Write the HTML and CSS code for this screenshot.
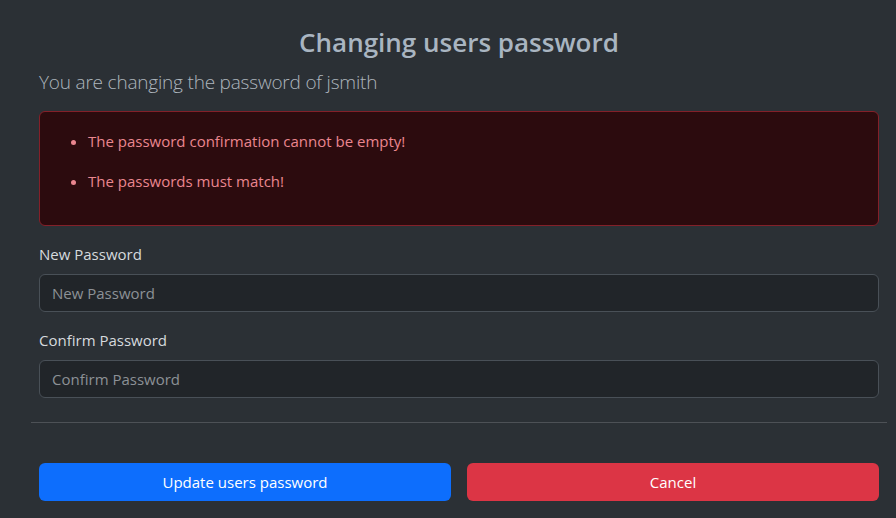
FILE: index.html
```html
<!DOCTYPE html>
<html lang="en">
<head>
<meta charset="utf-8">
<title>Changing users password</title>
<link rel="stylesheet" href="styles.css">
</head>
<body>
<div class="page">
  <div class="section">
    <h1 class="title">Changing users password</h1>
    <p class="lead">You are changing the password of jsmith</p>
    <div class="alert">
      <ul class="errors">
        <li>The password confirmation cannot be empty!</li>
        <li>The passwords must match!</li>
      </ul>
    </div>
    <div class="field">
      <label class="label" for="np">New Password</label>
      <input class="input" id="np" type="password" placeholder="New Password">
    </div>
    <div class="field">
      <label class="label" for="cp">Confirm Password</label>
      <input class="input" id="cp" type="password" placeholder="Confirm Password">
    </div>
  </div>
  <hr class="divider">
  <div class="section actions">
    <button class="btn btn-primary" type="button">Update users password</button>
    <button class="btn btn-danger" type="button">Cancel</button>
  </div>
</div>
</body>
</html>
```
FILE: styles.css
```css
* { box-sizing: border-box; }
html, body {
  margin: 0;
  background: #2b3035;
  color: #dee2e6;
  font-family: "Open Sans", "Noto Sans", sans-serif;
  font-size: 15px;
  line-height: 24px;
}
.page {
  padding: 0 9px 0 31px;
}
.section {
  padding: 0 8px;
}
.title {
  margin: 27px 0 0;
  text-align: center;
  font-size: 26px;
  font-weight: 600;
  line-height: 1.2;
  color: #a9b5c1;
}
.lead {
  margin: 10px 0 15px;
  font-size: 19px;
  line-height: 28px;
  letter-spacing: -0.2px;
  font-weight: 300;
  color: #adb5bd;
}
.alert {
  background: #2c0b0e;
  border: 1px solid #842029;
  border-radius: 6px;
  padding: 17px 16px 16px;
  color: #ea868f;
  margin-bottom: 16px;
}
.errors {
  margin: 0;
  padding-left: 32px;
}
.errors li {
  margin-bottom: 16px;
}
.field {
  margin-bottom: 16px;
}
.label {
  display: block;
  margin-bottom: 8px;
  color: #d6dade;
}
.input {
  display: block;
  width: 100%;
  height: 38px;
  padding: 6px 12px;
  font: inherit;
  color: #dee2e6;
  background: #212529;
  border: 1px solid #495057;
  border-radius: 6px;
}
.input::placeholder {
  color: #8c9196;
}
.divider {
  margin: 24px 0 40px;
  border: 0;
  border-top: 1px solid #4d5156;
}
.actions {
  display: flex;
  gap: 16px;
}
.btn {
  flex: 1;
  height: 38px;
  font: inherit;
  color: #fff;
  border: 1px solid transparent;
  border-radius: 6px;
}
.btn-primary { background: #0d6efd; }
.btn-danger { background: #dc3545; }
```
